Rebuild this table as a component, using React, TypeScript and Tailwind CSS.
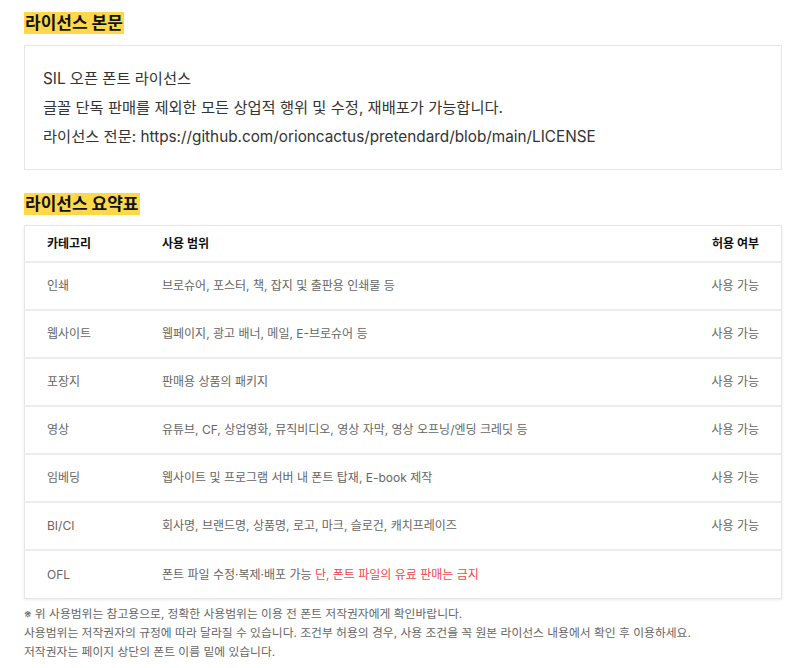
const rows = [
  { cat: "인쇄", scope: "브로슈어, 포스터, 책, 잡지 및 출판용 인쇄물 등", ok: "사용 가능" },
  { cat: "웹사이트", scope: "웹페이지, 광고 배너, 메일, E-브로슈어 등", ok: "사용 가능" },
  { cat: "포장지", scope: "판매용 상품의 패키지", ok: "사용 가능" },
  { cat: "영상", scope: "유튜브, CF, 상업영화, 뮤직비디오, 영상 자막, 영상 오프닝/엔딩 크레딧 등", ok: "사용 가능" },
  { cat: "임베딩", scope: "웹사이트 및 프로그램 서버 내 폰트 탑재, E-book 제작", ok: "사용 가능" },
  { cat: "BI/CI", scope: "회사명, 브랜드명, 상품명, 로고, 마크, 슬로건, 캐치프레이즈", ok: "사용 가능" },
];

export default function App() {
  return (
    <div className="min-h-screen bg-white pl-6 pr-[18px] pt-3 font-['Inter','Noto_Sans_CJK_KR',sans-serif]">
      <h2 className="w-fit bg-[#ffd84a] px-px text-[17px] font-bold leading-[22px] text-[#111]">라이선스 본문</h2>

      <div className="mt-[11px] border border-[#e6e6e6] px-[18px] py-[18px] text-[15.3px] leading-[29px] text-[#333]">
        <p>SIL 오픈 폰트 라이선스</p>
        <p>글꼴 단독 판매를 제외한 모든 상업적 행위 및 수정, 재배포가 가능합니다.</p>
        <p>라이선스 전문: https://github.com/orioncactus/pretendard/blob/main/LICENSE</p>
      </div>

      <h2 className="mt-[23px] w-fit bg-[#ffd84a] px-px text-[17px] font-bold leading-[22px] text-[#111]">라이선스 요약표</h2>

      <div className="mt-[10px] border border-[#e6e6e6] shadow-[0_1px_3px_rgba(0,0,0,0.08)]">
        <div className="flex h-[37px] items-center border-b-2 border-[#ececec] px-[22px] text-[12px] font-bold text-[#111]">
          <div className="w-[115px]">카테고리</div>
          <div className="flex-1">사용 범위</div>
          <div>허용 여부</div>
        </div>
        {rows.map((r) => (
          <div key={r.cat} className="flex h-[48px] items-center border-b-2 border-[#ececec] px-[22px] text-[12px] text-[#666]">
            <div className="w-[115px]">{r.cat}</div>
            <div className="flex-1">{r.scope}</div>
            <div>{r.ok}</div>
          </div>
        ))}
        <div className="flex h-[47px] items-center px-[22px] text-[12px] text-[#666]">
          <div className="w-[115px]">OFL</div>
          <div className="flex-1">
            폰트 파일 수정·복제·배포 가능 <span className="text-[#f0484f]">단, 폰트 파일의 유료 판매는 금지</span>
          </div>
        </div>
      </div>

      <div className="mt-[6px] text-[11.8px] leading-[19px] text-[#666]">
        <p>※ 위 사용범위는 참고용으로, 정확한 사용범위는 이용 전 폰트 저작권자에게 확인바랍니다.</p>
        <p>사용범위는 저작권자의 규정에 따라 달라질 수 있습니다. 조건부 허용의 경우, 사용 조건을 꼭 원본 라이선스 내용에서 확인 후 이용하세요.</p>
        <p>저작권자는 페이지 상단의 폰트 이름 밑에 있습니다.</p>
      </div>
    </div>
  );
}
